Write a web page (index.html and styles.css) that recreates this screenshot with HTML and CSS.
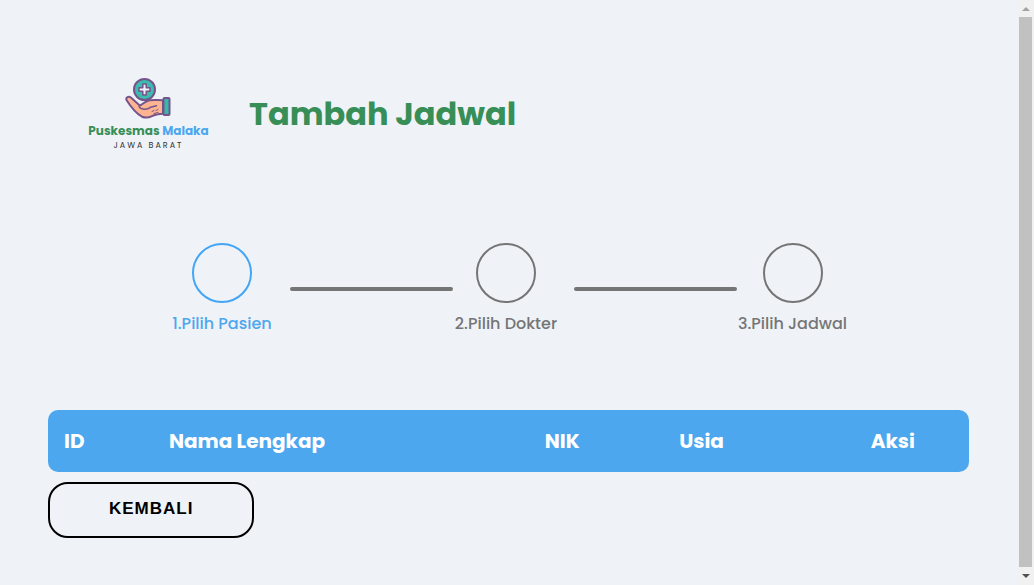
FILE: index.html
```html
<!DOCTYPE html>
<html lang="id">
<head>
<meta charset="utf-8">
<meta name="viewport" content="width=device-width, initial-scale=1">
<title>Tambah Jadwal</title>
<link rel="stylesheet" href="styles.css">
</head>
<body>
<div class="shell">
  <main class="page">
    <header class="header">
      <div class="brand">
        <svg class="brand-icon" viewBox="1 0 48 44" aria-hidden="true">
          <g stroke="#75538b" stroke-width="2" stroke-linejoin="round" stroke-linecap="round">
            <circle cx="20.500" cy="13.500" r="10.500" fill="#3cbcae"/>
            <path d="M18.800 8h3.400v3.800h3.800v3.400h-3.800v3.800h-3.400v-3.800h-3.800v-3.400h3.800z" fill="#eef1fa" stroke-width="1.500"/>
            <path d="M2.500 24c-1-2.800 2.200-4.200 4.600-2.200l8.700 7.600c2.200-.4 4.200-3.300 8-4.700 3-1.100 8-.5 15.200-.5v13.600c-5 .4-7.500.7-11 2.300-3.500 1.700-6.500 2-10 .6-5.500-3-11-9.500-15.500-16.700z" fill="#ffb491"/>
            <path d="M15 30.500c1.500 3.300 8 3.500 11.500.8l6-1.600" fill="none" stroke-width="1.500"/>
            <path d="M28 35.500l2-1m2 0l2-1m-4 4l4-1" fill="none" stroke-width="1"/>
            <rect x="39.500" y="22" width="6" height="17" rx="1" fill="#35b9aa"/>
          </g>
        </svg>
        <p class="brand-name">Puskesmas <span class="brand-accent">Malaka</span></p>
        <p class="brand-region">JAWA BARAT</p>
      </div>
      <h1 class="title">Tambah Jadwal</h1>
    </header>

    <ol class="steps">
      <li class="step step-active"><span class="step-circle"></span><span class="step-label">1.Pilih Pasien</span></li>
      <li class="step-line" aria-hidden="true"></li>
      <li class="step"><span class="step-circle"></span><span class="step-label">2.Pilih Dokter</span></li>
      <li class="step-line" aria-hidden="true"></li>
      <li class="step"><span class="step-circle"></span><span class="step-label">3.Pilih Jadwal</span></li>
    </ol>

    <table class="patients">
      <thead>
        <tr>
          <th class="col-id" scope="col">ID</th>
          <th class="col-name" scope="col">Nama Lengkap</th>
          <th class="col-nik" scope="col">NIK</th>
          <th class="col-age" scope="col">Usia</th>
          <th class="col-action" scope="col">Aksi</th>
        </tr>
      </thead>
    </table>
    <button class="back" type="button">KEMBALI</button>
  </main>

  <div class="scrollbar" aria-hidden="true">
    <svg class="scroll-arrow" viewBox="0 0 17 17"><path d="M5 11l4-4 4 4z" fill="#a3a3a3"/></svg>
    <div class="scroll-thumb"></div>
    <svg class="scroll-arrow" viewBox="0 0 17 17"><path d="M5 6l4 4 4-4z" fill="#505050"/></svg>
  </div>
</div>
</body>
</html>
```

FILE: styles.css
```css
* {
  box-sizing: border-box;
}

body {
  margin: 0;
  background: #eff3f8;
  color: #757575;
  font-family: Poppins, Inter, sans-serif;
}

.shell {
  display: grid;
  grid-template-columns: 1fr 17px;
  min-height: 100vh;
}

.page {
  padding: 76px 48px 46px;
}

.header {
  display: flex;
  align-items: center;
  gap: 40px;
  padding-left: 40px;
}

.brand {
  display: flex;
  flex-direction: column;
  align-items: center;
  width: 121px;
}

.brand-icon {
  width: 48px;
  height: 44px;
}

.brand-name {
  margin: 2px 0 0;
  color: #388e57;
  font-size: 12px;
  font-weight: 700;
  line-height: 18px;
  white-space: nowrap;
}

.brand-accent {
  color: #4ca7ee;
}

.brand-region {
  margin: 0;
  color: #333;
  font-size: 8px;
  line-height: 12px;
  letter-spacing: 2px;
}

.title {
  margin: 0;
  color: #388e57;
  font-size: 32px;
  font-weight: 700;
  line-height: 48px;
}

.steps {
  display: flex;
  justify-content: center;
  margin: 91px 0 0;
  padding: 0;
  list-style: none;
}

.step {
  display: flex;
  flex-direction: column;
  align-items: center;
  gap: 9px;
  min-width: 104px;
}

.step-circle {
  width: 60px;
  height: 60px;
  border: 2px solid #757575;
  border-radius: 50%;
}

.step-label {
  font-size: 16px;
  font-weight: 500;
  line-height: 24px;
  white-space: nowrap;
}

.step-active {
  color: #4ca7ee;
}

.step-active .step-circle {
  border-color: #42a5f5;
}

.step-line {
  width: 18%;
  max-width: 163px;
  height: 4px;
  margin: 44px 1px 0 16px;
  border-radius: 2px;
  background: #757575;
}

.patients {
  width: 100%;
  margin: 74px 0 10px;
  border-spacing: 0;
  border-radius: 10px;
  background: #4ca7ee;
  color: #fff;
  table-layout: fixed;
}

.patients th {
  padding: 16px;
  font-size: 20px;
  font-weight: 700;
  line-height: 30px;
  text-align: left;
  white-space: nowrap;
}

.col-id {
  width: 11.4%;
}

.col-name {
  width: 40.8%;
}

.col-nik {
  width: 14.6%;
}

.col-age {
  width: 20.8%;
}

.col-action {
  width: 12.4%;
}

.back {
  display: block;
  padding: 15px 59px 17px;
  border: 2px solid #000;
  border-radius: 20px;
  background: transparent;
  color: #000;
  font-family: "Liberation Sans", Arial, sans-serif;
  font-size: 17px;
  font-weight: 700;
  line-height: 20px;
  letter-spacing: 1px;
}

.scrollbar {
  display: flex;
  flex-direction: column;
  background: #f1f1f1;
}

.scroll-arrow {
  width: 17px;
  height: 17px;
}

.scroll-thumb {
  flex: 1;
  margin: 0 2px 1px;
  background: #c1c1c1;
}
```
